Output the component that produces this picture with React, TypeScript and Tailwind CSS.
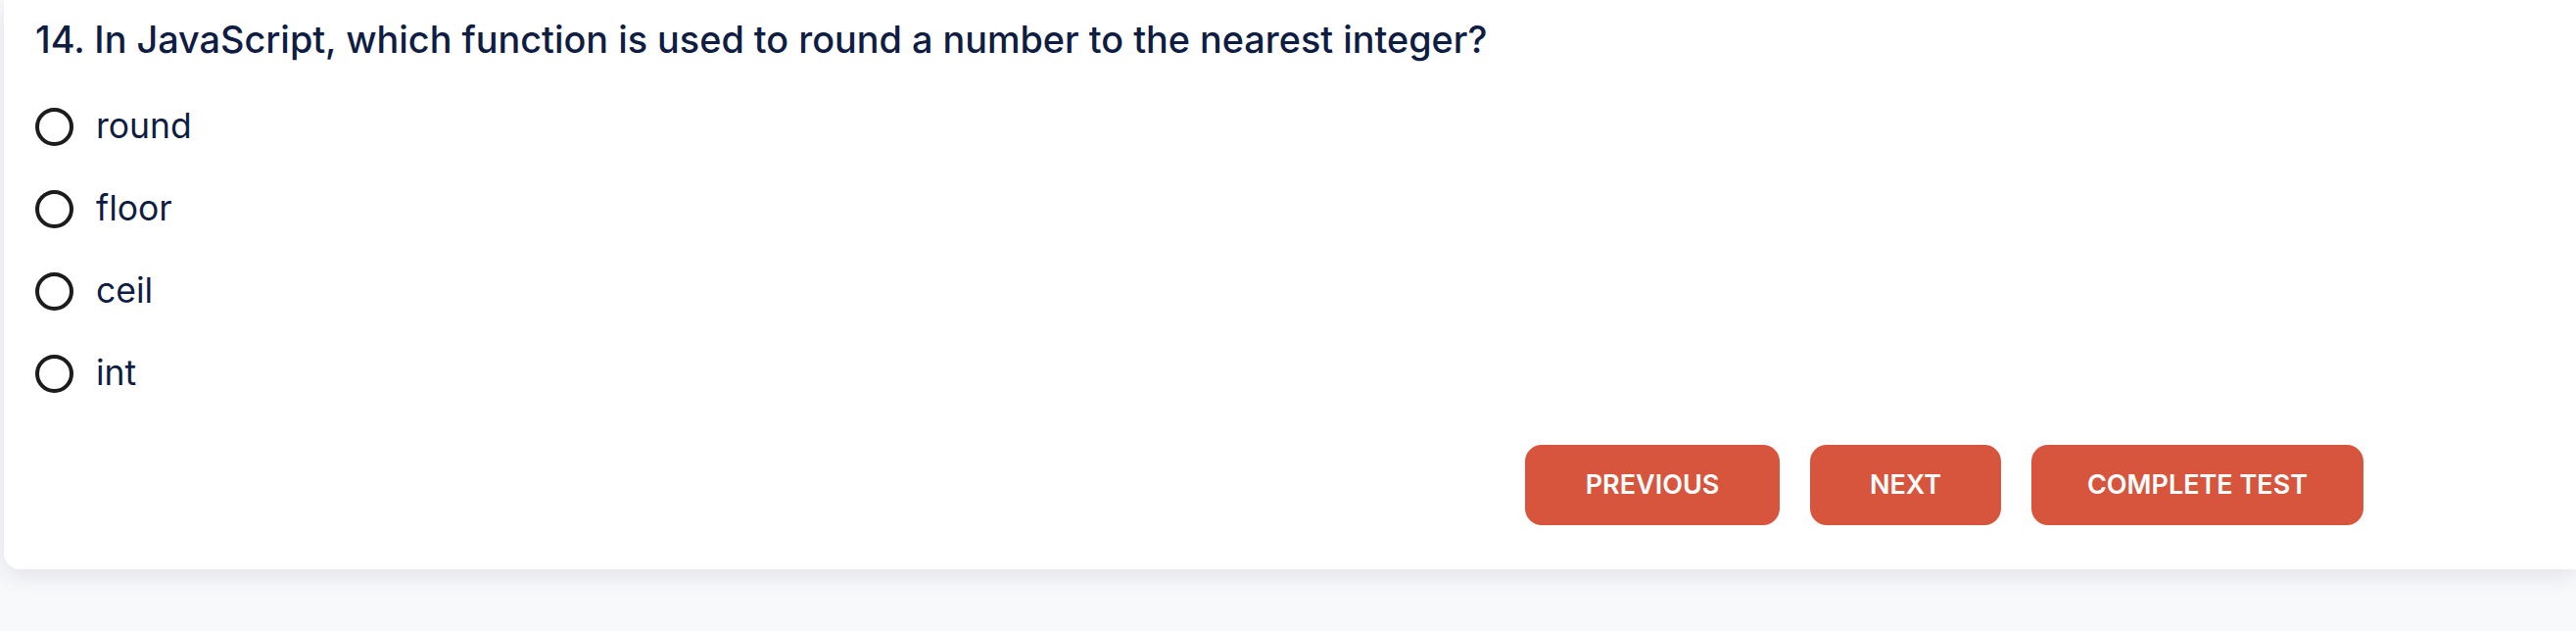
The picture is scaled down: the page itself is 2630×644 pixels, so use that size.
import React from "react";

const options = ["round", "floor", "ceil", "int"];

export default function App() {
  return (
    <div
      className="min-h-screen bg-[#f8f9fb] pl-[4px]"
      style={{ fontFamily: "Inter, 'Noto Sans', sans-serif" }}
    >
      <div className="bg-white rounded-bl-[16px] shadow-[0_6px_24px_rgba(20,24,40,0.10)] pl-[32px] pt-[16px] pb-[45px]">
        <h2 className="h-[48px] leading-[48px] text-[37.8px] font-medium text-[#101d42]">
          14. In JavaScript, which function is used to round a number to the nearest integer?
        </h2>
        <div className="mt-[23px] flex flex-col">
          {options.map((o) => (
            <label key={o} className="h-[84px] flex items-center gap-[23px] cursor-pointer">
              <span className="w-[39px] h-[39px] rounded-full border-[4px] border-[#1c1c1c] box-border" />
              <span className="text-[35.5px] text-[#101d42]">{o}</span>
            </label>
          ))}
        </div>
        <div className="mt-[31px] flex justify-end pr-[217px] gap-[31px]">
          <button className="h-[82px] w-[260px] rounded-[17px] bg-[#d8553d] text-white text-[27px] font-semibold uppercase">
            Previous
          </button>
          <button className="h-[82px] w-[195px] rounded-[17px] bg-[#d8553d] text-white text-[27px] font-semibold uppercase">
            Next
          </button>
          <button className="h-[82px] w-[339px] rounded-[17px] bg-[#d8553d] text-white text-[27px] font-semibold uppercase">
            Complete Test
          </button>
        </div>
      </div>
    </div>
  );
}
